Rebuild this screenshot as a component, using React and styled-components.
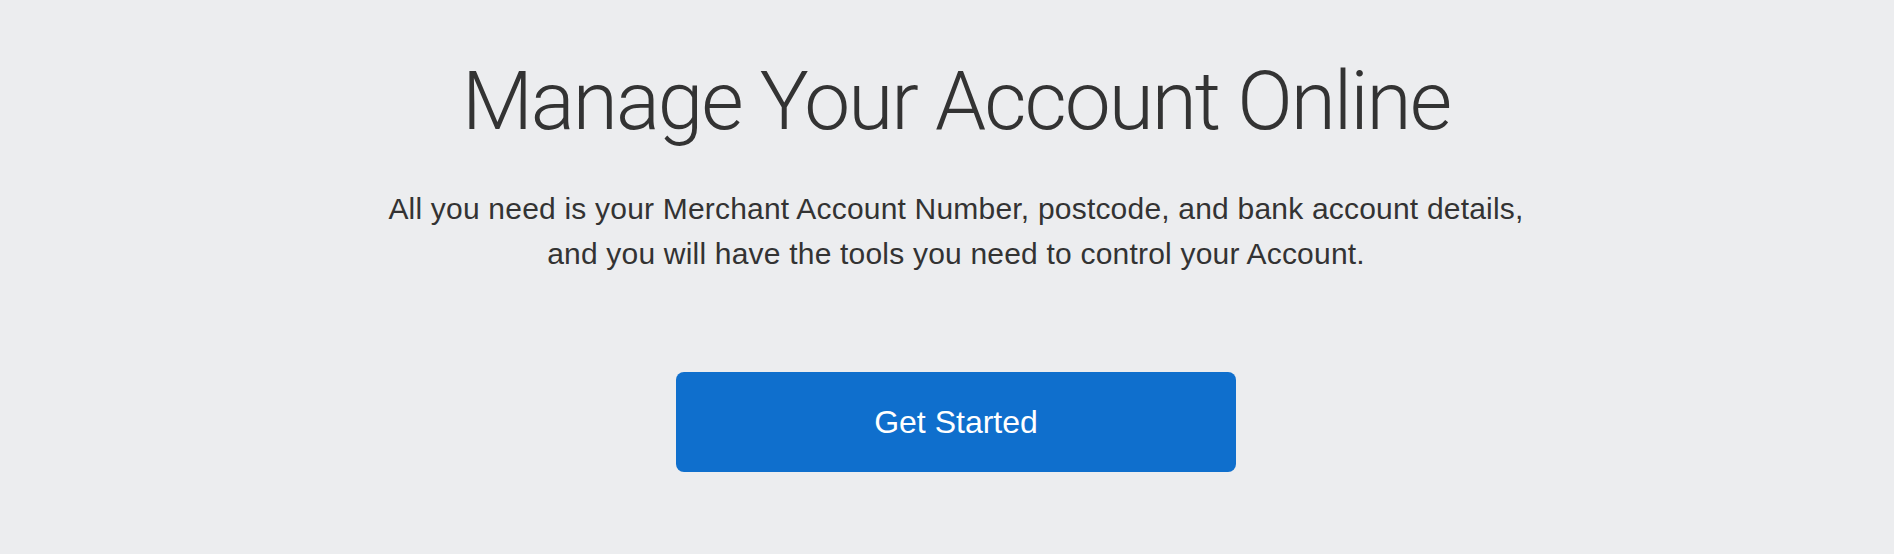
import React from 'react';
import styled, { createGlobalStyle } from 'styled-components';

const GlobalStyle = createGlobalStyle`
  html, body {
    margin: 0;
    padding: 0;
    background: #ecedef;
  }
`;

const Page = styled.section`
  min-height: 554px;
  box-sizing: border-box;
  padding: 53px 0 0 18px;
  display: flex;
  flex-direction: column;
  align-items: center;
  background: #ecedef;
  color: #333333;
`;

const Title = styled.h1`
  margin: 0;
  font-family: Roboto, "Liberation Sans", sans-serif;
  font-weight: 300;
  font-size: 82px;
  line-height: 96px;
  letter-spacing: -2px;
`;

const Lead = styled.p`
  margin: 37px 0 0;
  font-family: "Liberation Sans", Arial, sans-serif;
  font-size: 30px;
  line-height: 45px;
  letter-spacing: 0.2px;
  text-align: center;
`;

const StartButton = styled.button`
  margin-top: 96px;
  width: 560px;
  height: 100px;
  border: none;
  border-radius: 8px;
  background: #0f6fcd;
  color: #ffffff;
  font-family: "Liberation Sans", Arial, sans-serif;
  font-size: 32px;
  cursor: pointer;
`;

export default function App() {
  return (
    <>
      <GlobalStyle />
      <Page>
        <Title>Manage Your Account Online</Title>
        <Lead>
          All you need is your Merchant Account Number, postcode, and bank account details,
          <br />
          and you will have the tools you need to control your Account.
        </Lead>
        <StartButton>Get Started</StartButton>
      </Page>
    </>
  );
}
